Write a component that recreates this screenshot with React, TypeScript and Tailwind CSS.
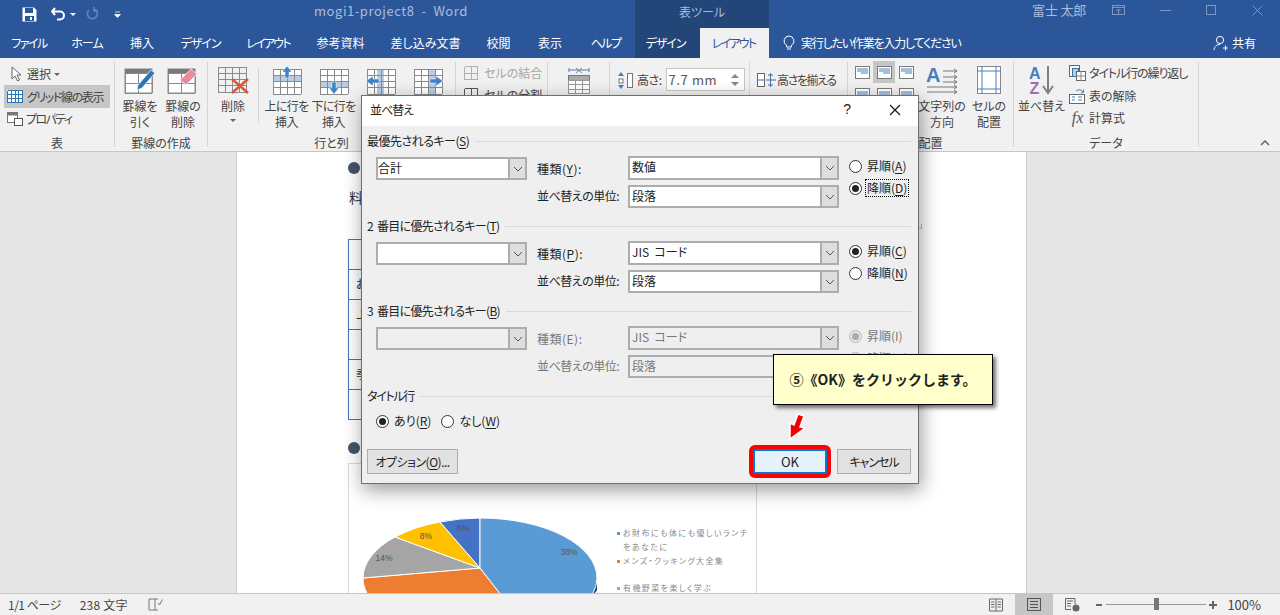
import type { ReactNode } from 'react'

const blue = '#4a7ebb'

function Sep() {
  return <div className="w-px shrink-0 bg-[#d6d6d6] mt-[4px] mb-[4px]" />
}

function Group({ w, label, children }: { w: string; label?: string; children: ReactNode }) {
  return (
    <div className={`${w} shrink-0 flex flex-col`}>
      <div className="flex-1 flex min-h-0">{children}</div>
      <div className="h-[20px] pt-[3px] text-center text-[12px] leading-[18px] text-[#444]">{label}</div>
    </div>
  )
}

function BigBtn({ w, icon, lines, chevron, tight }: { w: string; icon: ReactNode; lines: string[]; chevron?: boolean; tight?: boolean }) {
  return (
    <div className={`${w} shrink-0 flex flex-col items-center pt-[6px]`}>
      <div className="h-[32px] flex items-center justify-center">{icon}</div>
      <div className={`mt-[2px] text-[12px] leading-[16px] text-[#444] text-center whitespace-nowrap ${tight ? 'tracking-[-0.6px]' : ''}`}>
        {lines.map((l) => (
          <div key={l}>{l}</div>
        ))}
      </div>
      {chevron && <div className="w-0 h-0 mt-[5px] border-x-[3px] border-x-transparent border-t-[3px] border-t-[#666]" />}
    </div>
  )
}

function SmallRow({ icon, text, className = '' }: { icon: ReactNode; text: ReactNode; className?: string }) {
  return (
    <div className={`h-[22px] flex items-center gap-[3px] text-[12px] text-[#444] whitespace-nowrap ${className}`}>
      {icon}
      <span className="flex items-center">{text}</span>
    </div>
  )
}

function GridLines({ x, y, w, h, cols, rows, color = '#8a8a8a' }: { x: number; y: number; w: number; h: number; cols: number; rows: number; color?: string }) {
  const v = Array.from({ length: cols + 1 }, (_, i) => x + (w * i) / cols)
  const hz = Array.from({ length: rows + 1 }, (_, i) => y + (h * i) / rows)
  return (
    <g stroke={color} strokeWidth="1" shapeRendering="crispEdges">
      {v.map((p) => (
        <line key={`v${p}`} x1={p} x2={p} y1={y} y2={y + h} />
      ))}
      {hz.map((p) => (
        <line key={`h${p}`} y1={p} y2={p} x1={x} x2={x + w} />
      ))}
    </g>
  )
}

function DrawIcon() {
  return (
    <svg width="32" height="28" viewBox="0 0 32 28">
      <rect x="1" y="3" width="27" height="24" fill="#fff" stroke="#8a8a8a" />
      <rect x="1" y="3" width="27" height="4" fill="#7a7a7a" />
      <GridLines x={1} y={7} w={27} h={20} cols={2} rows={2} />
      <path d="M14 19 L27 4 L31 7 L18 22 L13 24 Z" fill="#2f75b5" stroke="#fff" strokeWidth="0.7" />
    </svg>
  )
}

function EraseIcon() {
  return (
    <svg width="32" height="28" viewBox="0 0 32 28">
      <rect x="1" y="3" width="27" height="24" fill="#fff" stroke="#8a8a8a" />
      <rect x="1" y="3" width="27" height="4" fill="#7a7a7a" />
      <GridLines x={1} y={7} w={27} h={20} cols={2} rows={2} />
      <path d="M13 14 L24 3 L30 8 L19 19 Z" fill="#ea8a9c" stroke="#fff" strokeWidth="0.7" />
    </svg>
  )
}

function DeleteIcon() {
  return (
    <svg width="32" height="28" viewBox="0 0 32 28">
      <GridLines x={1} y={1} w={28} h={25} cols={4} rows={4} />
      <path d="M15 13 L31 27 M31 13 L15 27" stroke="#d9583c" strokeWidth="2.6" />
    </svg>
  )
}

function RowIcon({ up }: { up?: boolean }) {
  return (
    <svg width="30" height="30" viewBox="0 0 30 30">
      <rect x="1" y="4" width="28" height="25" fill="#fff" />
      <rect x="1" y={up ? 10 : 17} width="28" height="6" fill="#b8cce4" />
      <GridLines x={1} y={4} w={28} h={25} cols={4} rows={4} />
      <path d={up ? 'M15 1 L20 7 H17 V13 H13 V7 H10 Z' : 'M15 29 L20 23 H17 V17 H13 V23 H10 Z'} fill="#3e83c4" stroke="#fff" strokeWidth="0.5" />
    </svg>
  )
}

function ColIcon({ left }: { left?: boolean }) {
  return (
    <svg width="30" height="30" viewBox="0 0 30 30">
      <rect x="1" y="4" width="28" height="25" fill="#fff" />
      <rect x={left ? 11 : 15} y="4" width="7" height="25" fill="#b8cce4" />
      <GridLines x={1} y={4} w={28} h={25} cols={4} rows={4} />
      <path d={left ? 'M0 16 L7 11 V14 H13 V18 H7 V21 Z' : 'M30 16 L23 11 V14 H17 V18 H23 V21 Z'} fill="#3e83c4" stroke="#fff" strokeWidth="0.5" />
    </svg>
  )
}

function AlignCell({ active, lines }: { active?: boolean; lines: 'top' | 'mid' }) {
  return (
    <div className={`w-[22px] h-[22px] flex items-center justify-center ${active ? 'bg-[#c6c6c6]' : ''}`}>
      <svg width="15" height="13" viewBox="0 0 15 13">
        <rect x="0.5" y="0.5" width="14" height="12" fill="#fff" stroke="#7a7a7a" />
        <path d={lines === 'top' ? 'M2 3 H13 M2 5 H13 M6 7 H13' : 'M2 4 H13 M2 6 H13 M4 8 H11'} stroke={blue} />
      </svg>
    </div>
  )
}

function Ribbon() {
  return (
    <div className="h-[94px] bg-[#f1f1f1] border-b border-[#c6c6c6] flex">
      <Group w="w-[114px]" label="表">
        <div className="w-full pl-[4px] pr-[4px] pt-[5px] flex flex-col">
          <SmallRow
            className="pl-[6px]"
            icon={
              <svg width="14" height="16" viewBox="0 0 14 16">
                <path d="M2 1 L2 13 L5 10 L7.5 15 L9.5 14 L7 9 L11 9 Z" fill="#fff" stroke="#666" />
              </svg>
            }
            text={
              <>
                選択
                <span className="ml-[3px] w-0 h-0 border-x-[3px] border-x-transparent border-t-[3px] border-t-[#666]" />
              </>
            }
          />
          <SmallRow
            className="h-[23px] bg-[#c6c6c6] pl-[3px] gap-[4px] tracking-[-1.4px]"
            icon={
              <svg width="16" height="13" viewBox="0 0 16 13">
                <rect width="16" height="13" fill="#fff" />
                <GridLines x={0.5} y={0.5} w={15} h={12} cols={4} rows={3} color="#2f75b5" />
              </svg>
            }
            text="グリッド線の表示"
          />
          <SmallRow
            className="pl-[3px] tracking-[-1.6px]"
            icon={
              <svg width="16" height="14" viewBox="0 0 16 14">
                <rect x="0.5" y="0.5" width="10" height="10" fill="#fff" stroke="#777" />
                <rect x="0.5" y="0.5" width="10" height="3" fill="#777" />
                <rect x="7.5" y="6.5" width="8" height="7" fill="#fff" stroke="#555" />
              </svg>
            }
            text="プロパティ"
          />
        </div>
      </Group>
      <Sep />
      <Group w="w-[92px]" label="罫線の作成">
        <div className="pl-[4px] flex">
          <BigBtn w="w-[42px]" icon={<DrawIcon />} lines={['罫線を', '引く']} />
          <BigBtn w="w-[44px]" icon={<EraseIcon />} lines={['罫線の', '削除']} />
        </div>
      </Group>
      <Sep />
      <Group w="w-[247px]" label="行と列">
        <BigBtn w="w-[50px]" icon={<DeleteIcon />} lines={['削除']} chevron />
        <div className="w-px bg-[#d6d6d6] my-[10px] mb-[8px]" />
        <div className="pl-[4px] flex">
          <BigBtn w="w-[47px]" icon={<RowIcon up />} lines={['上に行を', '挿入']} tight />
          <BigBtn w="w-[47px]" icon={<RowIcon />} lines={['下に行を', '挿入']} tight />
          {/* labels of these two sit under the dialog */}
          <BigBtn w="w-[47px]" icon={<ColIcon left />} lines={[]} />
          <BigBtn w="w-[47px]" icon={<ColIcon />} lines={[]} />
        </div>
      </Group>
      <Sep />
      <Group w="w-[91px]">
        <div className="pl-[8px] pt-[4px] flex flex-col">
          <SmallRow
            className="text-[#a6a6a6]"
            icon={
              <svg width="14" height="14" viewBox="0 0 14 14" className="mr-[3px]">
                <GridLines x={0.5} y={0.5} w={13} h={13} cols={2} rows={2} color="#b0b0b0" />
              </svg>
            }
            text="セルの結合"
          />
          <SmallRow
            icon={
              <svg width="14" height="14" viewBox="0 0 14 14" className="mr-[3px]">
                <GridLines x={0.5} y={0.5} w={13} h={13} cols={2} rows={2} color="#555" />
              </svg>
            }
            text="セルの分割"
          />
        </div>
      </Group>
      <Sep />
      <Group w="w-[299px]">
        <div className="w-[61px] flex justify-center pt-[8px]">
          <svg width="24" height="28" viewBox="0 0 24 28">
            <path d="M2 4 H22 M2 2 V6 M22 2 V6" stroke={blue} />
            <path d="M9 2 L15 7 M15 2 L9 7" stroke="#888" />
            <rect x="1.5" y="9.5" width="21" height="18" fill="#fff" stroke="#777" />
            <rect x="2" y="10" width="20" height="4" fill="#aaa" />
            <GridLines x={1.5} y={14} w={21} h={13.5} cols={3} rows={3} color="#999" />
          </svg>
        </div>
        <div className="w-px bg-[#d6d6d6] my-[4px]" />
        <div className="w-[139px] pl-[7px] pt-[11px] flex items-start gap-[4px]">
          <svg width="16" height="17" viewBox="0 0 16 17" className="mt-[3px] shrink-0">
            <path d="M4 0 L7 4 H1 Z M4 17 L7 13 H1 Z" fill={blue} />
            <rect x="2" y="7" width="4" height="4" fill="#fff" stroke="#777" />
            <rect x="10.5" y="1.5" width="5" height="14" fill="#fff" stroke="#777" />
          </svg>
          <span className="text-[12px] text-[#444] leading-[22px] tracking-[-0.5px]">高さ:</span>
          <div className="w-[79px] h-[23px] bg-white border border-[#c6c6c6] flex items-center justify-between pl-[2px] pr-[5px] -mt-[1px] shrink-0">
            <span className="text-[13px] text-[#555] tracking-[0.6px]">7.7 mm</span>
            <span className="flex flex-col gap-[4px]">
              <span className="block w-0 h-0 border-x-[4px] border-x-transparent border-b-[4px] border-b-[#888]" />
              <span className="block w-0 h-0 border-x-[4px] border-x-transparent border-t-[4px] border-t-[#888]" />
            </span>
          </div>
        </div>
        <div className="w-px bg-[#d6d6d6] my-[4px]" />
        <div className="pl-[7px] pt-[4px]">
          <SmallRow
            className="mt-[7px] gap-0 tracking-[-1.4px]"
            icon={
              <svg width="19" height="14" viewBox="0 0 19 14" className="-mr-[2px]">
                <rect x="0.5" y="0.5" width="7" height="13" fill="#fff" stroke="#666" />
                <path d="M0 7 H7 M9 7 H19 M13.5 0 V14 M11 2 H16 M11 12 H16" stroke="#3e6fa8" />
              </svg>
            }
            text="高さを揃える"
          />
        </div>
      </Group>
      <Sep />
      <Group w="w-[165px]" label="配置">
        <div className="pt-[3px] pl-[3px] grid grid-cols-3 h-[47px] w-[69px] shrink-0">
          <AlignCell lines="top" />
          <AlignCell lines="top" active />
          <AlignCell lines="top" />
          <AlignCell lines="mid" />
          <AlignCell lines="mid" />
          <AlignCell lines="mid" />
        </div>
        <BigBtn
          w="w-[50px]"
          icon={
            <svg width="32" height="30" viewBox="0 0 32 30" className="overflow-visible">
              <text x="0" y="17" fontSize="20" fontWeight="700" fill="#4a7ebb" fontFamily="'Liberation Sans',sans-serif">A</text>
              <path d="M17 6 H31 M17 12 H31 M17 17 H31 M1 22 H31 M1 27 H31 M28 4 L31 6 L28 8 M28 10 L31 12 L28 14 M28 15 L31 17 L28 19 M28 20 L31 22 L28 24 M28 25 L31 27 L28 29" stroke="#777" fill="none" />
            </svg>
          }
          lines={['文字列の', '方向']}
        />
        <BigBtn
          w="w-[44px]"
          icon={
            <svg width="24" height="28" viewBox="0 0 24 28">
              <rect x="0.5" y="0.5" width="23" height="27" fill="#fff" stroke="#888" />
              <path d="M5 0 V28 M19 0 V28 M0 5 H24 M0 23 H24" stroke={blue} />
            </svg>
          }
          lines={['セルの', '配置']}
        />
      </Group>
      <Sep />
      <Group w="w-[184px]" label="データ">
        <BigBtn
          w="w-[55px]"
          icon={
            <svg width="26" height="30" viewBox="0 0 26 30" className="overflow-visible">
              <text x="0" y="14" fontSize="16" fontWeight="700" fill="#4a7ebb" fontFamily="'Liberation Sans',sans-serif">A</text>
              <text x="0.5" y="29" fontSize="16" fontWeight="700" fill="#a36bb5" fontFamily="'Liberation Sans',sans-serif">Z</text>
              <path d="M19 1 V27 M14 21 L19 28 L24 21" stroke="#808080" strokeWidth="2" fill="none" />
            </svg>
          }
          lines={['並べ替え']}
        />
        <div className="flex flex-col pt-[4px]">
          <SmallRow
            className="gap-[2px] tracking-[-1.1px]"
            icon={
              <svg width="17" height="16" viewBox="0 0 17 16">
                <rect x="0.5" y="0.5" width="10" height="11" fill="#fff" stroke="#666" />
                <rect x="3.5" y="3.5" width="6" height="8" fill="#b8cce4" stroke="#3e6fa8" />
                <rect x="7.5" y="6.5" width="9" height="9" fill="#fff" stroke="#666" />
                <path d="M12 6 V16 M8 11 H17" stroke="#888" />
              </svg>
            }
            text="タイトル行の繰り返し"
          />
          <SmallRow
            className="h-[23px] gap-[2px]"
            icon={
              <svg width="17" height="16" viewBox="0 0 17 16">
                <path d="M7 3 Q11 0 14 4 M12 5 L14.5 4.5 L14.5 1.5" stroke="#3e83c4" fill="none" />
                <rect x="0.5" y="6.5" width="15" height="9" fill="#fff" stroke="#666" />
                <path d="M3 9 H6 M3 12 H6 M9 9 H13 M9 12 H13" stroke="#3e83c4" />
              </svg>
            }
            text="表の解除"
          />
          <SmallRow
            className="gap-[2px]"
            icon={<span className="w-[17px] text-center font-['Liberation_Serif',serif] italic text-[16px] leading-[16px] text-[#555]">fx</span>}
            text="計算式"
          />
        </div>
      </Group>
      <Sep />
      <div className="flex-1 flex items-end justify-end pr-[10px] pb-[5px]">
        <svg width="10" height="6" viewBox="0 0 10 6">
          <path d="M1 5 L5 1 L9 5" stroke="#666" strokeWidth="1.5" fill="none" />
        </svg>
      </div>
    </div>
  )
}

function TitleBar() {
  return (
    <div className="h-[28px] bg-[#2b579a] flex text-[13px] text-[#a9bcd9]">
      <div className="w-[314px] flex items-center shrink-0">
        <svg width="15" height="15" viewBox="0 0 15 15" className="ml-[22px]">
          <path d="M0.5 0.5 H12 L14.5 3 V14.5 H0.5 Z" fill="#fff" />
          <rect x="3" y="1" width="8" height="5" fill="#2b579a" />
          <rect x="3" y="9" width="9" height="5" fill="#2b579a" />
          <rect x="8" y="10" width="2" height="3" fill="#fff" />
        </svg>
        <svg width="16" height="14" viewBox="0 0 16 14" className="ml-[14px]">
          <path d="M4 1 L1 4.5 L4 8 M1.5 4.5 H9 A4 4 0 0 1 9 12.5 H6" stroke="#fff" strokeWidth="2" fill="none" />
        </svg>
        <span className="ml-[3px] w-0 h-0 border-x-[3px] border-x-transparent border-t-[3px] border-t-white" />
        <svg width="14" height="14" viewBox="0 0 14 14" className="ml-[9px]">
          <path d="M4 3 A5 5 0 1 0 9 2 M9 0 V4 H13" stroke="#6384b6" strokeWidth="1.6" fill="none" />
        </svg>
        <svg width="7" height="7" viewBox="0 0 7 7" className="ml-[15px]">
          <path d="M1 1 H6 M0.5 3.5 H6.5 L3.5 6.5 Z" stroke="#fff" fill="#fff" strokeWidth="0.7" />
        </svg>
      </div>
      <div className="w-[321px] leading-[21px] text-[13px] tracking-[0.55px] whitespace-pre">mogi1-project8  -  Word</div>
      <div className="w-[134px] bg-[#234679] text-center leading-[23px] text-[12px]">表ツール</div>
      <div className="w-[317px] leading-[20px] text-[13px] tracking-[-0.2px] text-right">富士 太郎</div>
      <div className="flex-1 flex items-start pt-[5px]">
        <svg width="13" height="11" viewBox="0 0 13 11" className="ml-[26px]">
          <rect x="0.5" y="0.5" width="12" height="9" fill="none" stroke="#7f98c2" />
          <path d="M0 2.5 H13 M6.5 9 V4 M4.5 6 L6.5 4 L8.5 6" stroke="#7f98c2" fill="none" />
        </svg>
        <div className="w-[11px] h-px bg-[#7f98c2] ml-[35px] mt-[5px]" />
        <div className="w-[10px] h-[10px] border border-[#7f98c2] ml-[35px]" />
        <svg width="11" height="11" viewBox="0 0 11 11" className="ml-[36px]">
          <path d="M0.5 0.5 L10.5 10.5 M10.5 0.5 L0.5 10.5" stroke="#7f98c2" />
        </svg>
      </div>
    </div>
  )
}

function TabBar() {
  const tabs: [string, string][] = [
    ['ファイル', 'w-[58px] tracking-[-1.5px]'],
    ['ホーム', 'w-[58px] tracking-[-1px]'],
    ['挿入', 'w-[52px]'],
    ['デザイン', 'w-[65px] tracking-[-1px]'],
    ['レイアウト', 'w-[70px] tracking-[-1.8px]'],
    ['参考資料', 'w-[75px]'],
    ['差し込み文書', 'w-[95px]'],
    ['校閲', 'w-[51px]'],
    ['表示', 'w-[52px]'],
    ['ヘルプ', 'w-[59px] tracking-[-1.5px]'],
  ]
  return (
    <div className="h-[30px] bg-[#2b579a] flex text-[12px] text-white items-stretch">
      {tabs.map(([t, w]) => (
        <div key={t} className={`${w} shrink-0 flex items-center justify-center`}>
          {t}
        </div>
      ))}
      <div className="w-[65px] shrink-0 bg-[#234679] flex items-center justify-center tracking-[-1px] pr-[4px]">デザイン</div>
      <div className="w-[69px] shrink-0 bg-[#f1f1f1] text-[#2b579a] flex items-center justify-center tracking-[-1.8px] pr-[2px]">レイアウト</div>
      <div className="pl-[13px] flex items-center gap-[3px]">
        <svg width="14" height="16" viewBox="0 0 14 16">
          <path d="M7 1 A5 5 0 0 0 4.5 10.3 V12 H9.5 V10.3 A5 5 0 0 0 7 1 Z M5 14 H9" stroke="#fff" fill="none" />
        </svg>
        <span className="pl-[2px] tracking-[-1.2px]">実行したい作業を入力してください</span>
      </div>
      <div className="flex-1 flex items-center justify-end pr-[24px] gap-[3px]">
        <svg width="16" height="16" viewBox="0 0 16 16">
          <circle cx="7" cy="5" r="3.6" stroke="#fff" fill="none" />
          <path d="M1 15 C1.5 11 4 9.5 7 9.5 M10 13 H15 M12.5 10.5 V15.5" stroke="#fff" fill="none" />
        </svg>
        <span>共有</span>
      </div>
    </div>
  )
}

function PieChart() {
  return (
    <svg width="240" height="130" viewBox="360 515 240 130" className="shrink-0">
      <path d="M597 578 V590 L590 600 L580 600 Z" fill="#1f3a5f" />
      <path d="M480 568 L363 578 A117 60 0 0 0 530 632 Z" fill="#ed7d31" stroke="#fff" />
      <path d="M480 568 L363 578 A117 60 0 0 1 395 537 Z" fill="#a5a5a5" stroke="#fff" />
      <path d="M480 568 L395 537 A117 60 0 0 1 440 522 Z" fill="#ffc000" stroke="#fff" />
      <path d="M480 568 L440 522 A117 60 0 0 1 480 518 Z" fill="#4472c4" stroke="#fff" />
      <path d="M480 568 L480 518 A117 60 0 0 1 597 578 A117 60 0 0 1 530 632 Z" fill="#5b9bd5" stroke="#fff" />
      <g fontSize="8.5" fill="#555" textAnchor="middle" fontFamily="'Liberation Sans',sans-serif">
        <text x="569" y="555">38%</text>
        <text x="384" y="561">14%</text>
        <text x="426" y="539">8%</text>
        <text x="463" y="531">6%</text>
      </g>
    </svg>
  )
}

function Legend({ color, lines, className = '' }: { color: string; lines: string[]; className?: string }) {
  return (
    <div className={`flex gap-[3px] ${className}`}>
      <span className={`w-[3px] h-[3px] mt-[6px] shrink-0 ${color}`} />
      <div className="text-[8px] leading-[14px] tracking-[1.4px] text-[#8a8a8a] whitespace-nowrap">
        {lines.map((l) => (
          <div key={l}>{l}</div>
        ))}
      </div>
    </div>
  )
}

function DocPage() {
  return (
    <div className="flex-1 min-h-0 bg-[#e6e6e6] overflow-hidden">
      <div className="ml-[236px] w-[791px] h-full bg-white border-x border-[#d0d0d0] pl-[111px] overflow-hidden">
        <div className="w-[12px] h-[12px] rounded-full bg-[#44546a] mt-[10px]" />
        <div className="text-[14px] leading-[20px] text-[#333] mt-[13px] pl-[1px]">料</div>
        <div className="w-[530px] mt-[32px] border-l border-t border-[#4472b4] flex flex-col">
          {['', 'お', '上', '', '季', ''].map((t, i) => (
            <div key={i} className="h-[30px] border-b border-[#4472b4] text-[12px] leading-[28px] pl-[7px] text-[#333] shrink-0">
              {t}
            </div>
          ))}
        </div>
        <div className="w-[12px] h-[12px] rounded-full bg-[#44546a] mt-[22px]" />
        <div className="w-[409px] h-[200px] mt-[9px] border border-[#d9d9d9] flex pl-[11px] pt-[51px]">
          <PieChart />
          <div className="w-[0px] pt-[11px] ml-[17px] flex flex-col">
            <Legend color="bg-[#5b9bd5]" lines={['お財布にも体にも優しいランチ', 'をあなたに']} />
            <Legend color="bg-[#ed7d31]" lines={['メンズ・クッキング大全集']} />
            <Legend color="bg-[#a5a5a5]" lines={['有機野菜を楽しく学ぶ']} className="mt-[13px]" />
          </div>
        </div>
      </div>
    </div>
  )
}

function StatusBar() {
  return (
    <div className="h-[22px] bg-[#f1f1f1] border-t border-[#c6c6c6] flex items-center text-[12px] text-[#444]">
      <span className="ml-[8px] tracking-[-0.5px]">1/1 ページ</span>
      <span className="ml-[19px] tracking-[0.2px]">238 文字</span>
      <svg width="15" height="14" viewBox="0 0 15 14" className="ml-[20px]">
        <path d="M1 1 H7 V12 H1 Z M7 1 H10 M7 12 H10 M10 5 L11.5 7 L14.5 1.5" stroke="#777" fill="none" />
      </svg>
      <div className="flex-1" />
      <svg width="14" height="14" viewBox="0 0 14 14">
        <path d="M0.5 1 H7 V13 H0.5 Z M7 1 H13.5 V13 H7 M2 4 H5.5 M2 6.5 H5.5 M2 9 H5.5 M8.5 4 H12 M8.5 6.5 H12 M8.5 9 H12" stroke="#666" fill="none" />
      </svg>
      <div className="ml-[12px] w-[38px] h-full bg-[#c6c6c6] flex items-center justify-center">
        <svg width="14" height="13" viewBox="0 0 14 13">
          <rect x="0.5" y="0.5" width="13" height="12" fill="none" stroke="#555" />
          <path d="M3 3.5 H11 M3 6.5 H11 M3 9.5 H11" stroke="#555" />
        </svg>
      </div>
      <svg width="15" height="14" viewBox="0 0 15 14" className="ml-[12px]">
        <path d="M0.5 0.5 H10 V6 M0.5 0.5 V11.5 H6 M2 3 H8 M2 5.5 H6 M2 8 H6" stroke="#666" fill="none" />
        <circle cx="11" cy="10" r="3.5" fill="#666" />
      </svg>
      <span className="ml-[16px] w-[6px] h-[2px] bg-[#666]" />
      <div className="ml-[4px] w-[100px] h-px bg-[#999] relative">
        <span className="absolute left-[48px] -top-[6px] w-[5px] h-[12px] bg-[#777]" />
      </div>
      <svg width="8" height="8" viewBox="0 0 8 8" className="ml-[3px]">
        <path d="M0 4 H8 M4 0 V8" stroke="#666" strokeWidth="2" />
      </svg>
      <span className="ml-[10px] mr-[19px] text-[13px]">100%</span>
    </div>
  )
}

function ComboArrow() {
  return (
    <div className="w-[17px] h-full bg-[#dedede] border-l-2 border-[#adadad] flex items-center justify-center shrink-0">
      <svg width="10" height="6" viewBox="0 0 10 6">
        <path d="M1 1 L5 5 L9 1" stroke="#555" fill="none" />
      </svg>
    </div>
  )
}

function Select({ value, disabled, h = 'h-[24px]', pad = 'pl-[2px]' }: { value: string; disabled?: boolean; h?: string; pad?: string }) {
  return (
    <div className={`${h} border-2 border-[#adadad] flex ${disabled ? 'bg-[#efefef] text-[#777]' : 'bg-white text-[#222]'}`}>
      <span className={`flex-1 ${pad} text-[12px] leading-[18px] whitespace-pre`}>{value}</span>
      <ComboArrow />
    </div>
  )
}

function Radio({ label, checked, disabled, focus, className = '' }: { label: ReactNode; checked?: boolean; disabled?: boolean; focus?: boolean; className?: string }) {
  return (
    <div className={`flex items-center gap-[3px] h-[22px] whitespace-nowrap ${className}`}>
      <span className={`w-[13px] h-[13px] rounded-full border flex items-center justify-center shrink-0 ${disabled ? 'border-[#bbb] bg-[#e6e6e6]' : 'border-[#333] bg-white'}`}>
        {checked && <span className={`w-[7px] h-[7px] rounded-full ${disabled ? 'bg-[#aaa]' : 'bg-[#222]'}`} />}
      </span>
      <span className={`px-[1px] leading-[16px] border border-dotted ${focus ? 'border-black' : 'border-transparent'} ${disabled ? 'text-[#777]' : 'text-[#222]'}`}>{label}</span>
    </div>
  )
}

function Hot({ k }: { k: string }) {
  return (
    <>
      (<span className="underline underline-offset-2">{k}</span>)
    </>
  )
}

function SectionHead({ children, tight = 'tracking-[-0.5px]' }: { children: ReactNode; tight?: string }) {
  return (
    <div className="h-[18px] flex items-center gap-[6px] whitespace-nowrap text-[#222]">
      <span className={tight}>{children}</span>
      <span className="flex-1 h-px bg-[#d9d9d9]" />
    </div>
  )
}

function SortSection({
  head, tight, keyValue, type, typeLabel, radio1, radio2, checked, focus, disabled,
}: {
  head: ReactNode; tight?: string; keyValue: string; type: string; typeLabel: ReactNode; radio1: ReactNode; radio2: ReactNode; checked: 1 | 2; focus?: boolean; disabled?: boolean
}) {
  const labelCls = disabled ? 'text-[#777]' : 'text-[#222]'
  return (
    <div className="h-[85px]">
      <SectionHead tight={tight}>{head}</SectionHead>
      <div className="flex mt-[6px]">
        <div className="w-[151px] ml-[9px] mt-[1px]">
          <Select value={keyValue} disabled={disabled} h="h-[23px]" pad="pl-[0px]" />
        </div>
        <div className={`w-[91px] ml-[10px] ${labelCls}`}>
          <div className="h-[24px] leading-[26px] tracking-[0.5px]">{typeLabel}</div>
          <div className="h-[24px] mt-[5px] leading-[22px] whitespace-nowrap tracking-[-0.5px]">並べ替えの単位:</div>
        </div>
        <div className="w-[211px] flex flex-col gap-[5px]">
          <Select value={type} disabled={disabled} />
          <Select value="段落" disabled={disabled} h="h-[23px]" />
        </div>
        <div className="ml-[10px] -mt-[1px]">
          <Radio label={radio1} checked={checked === 1} disabled={disabled} />
          <Radio label={radio2} checked={checked === 2} disabled={disabled} focus={focus} />
        </div>
      </div>
    </div>
  )
}

function Button({ children, w, active }: { children: ReactNode; w: string; active?: boolean }) {
  return (
    <div className={`${w} h-[25px] flex items-center justify-center text-[#222] ${active ? 'bg-[#e5f1fb] border-2 border-[#0078d7]' : 'bg-[#e1e1e1] border border-[#adadad]'}`}>
      {children}
    </div>
  )
}

function SortDialog() {
  return (
    <div className="absolute left-[361px] top-[95px] w-[558px] h-[389px] bg-[#efefef] border border-[#6f6f6f] shadow-[2px_6px_18px_rgba(0,0,0,0.4)] flex flex-col text-[12px]">
      <div className="h-[30px] bg-white flex items-center shrink-0 pl-[8px] pb-[3px]">
        <span className="flex-1 text-[#222] tracking-[-1px]">並べ替え</span>
        <span className="font-['Liberation_Sans',sans-serif] text-[14px] text-[#222] mr-[38px]">?</span>
        <svg width="12" height="12" viewBox="0 0 12 12" className="mr-[17px]">
          <path d="M1 1 L11 11 M11 1 L1 11" stroke="#111" strokeWidth="1.1" />
        </svg>
      </div>
      <div className="flex-1 flex flex-col pl-[5px] pr-[7px] pt-[6px] pb-[9px]">
        <SortSection
          head={<>最優先されるキー<Hot k="S" /></>}
          keyValue="合計"
          type="数値"
          typeLabel={<>種類<Hot k="Y" />:</>}
          radio1={<>昇順<Hot k="A" /></>}
          radio2={<>降順<Hot k="D" /></>}
          checked={2}
          focus
        />
        <SortSection
          head={<>2&nbsp;&nbsp;番目に優先されるキー<Hot k="T" /></>}
          tight="tracking-[-0.7px]"
          keyValue=""
          type="JIS  コード"
          typeLabel={<>種類<Hot k="P" />:</>}
          radio1={<>昇順<Hot k="C" /></>}
          radio2={<>降順<Hot k="N" /></>}
          checked={1}
        />
        <SortSection
          head={<>3&nbsp;&nbsp;番目に優先されるキー<Hot k="B" /></>}
          tight="tracking-[-0.7px]"
          keyValue=""
          type="JIS  コード"
          typeLabel="種類(E):"
          radio1="昇順(I)"
          radio2="降順(O)"
          checked={1}
          disabled
        />
        <SectionHead tight="tracking-[-1.3px]">タイトル行</SectionHead>
        <div className="flex pl-[9px] mt-[5px] gap-[8px]">
          <Radio label={<>あり<Hot k="R" /></>} checked />
          <Radio label={<>なし<Hot k="W" /></>} />
        </div>
        <div className="mt-auto flex items-end">
          <Button w="w-[91px]"><span className="tracking-[-0.5px]">オプション<Hot k="O" />...</span></Button>
          <div className="flex-1" />
          <Button w="w-[74px]" active><span className="text-[13px]">OK</span></Button>
          <div className="w-[10px]" />
          <Button w="w-[74px]"><span className="tracking-[-1px]">キャンセル</span></Button>
        </div>
      </div>
    </div>
  )
}

export default function App() {
  return (
    <div className="relative w-[1280px] h-[615px] overflow-hidden flex flex-col bg-[#e6e6e6] font-['Noto_Sans_CJK_JP','Noto_Sans',sans-serif] [font-feature-settings:'palt']">
      <TitleBar />
      <TabBar />
      <Ribbon />
      <DocPage />
      <StatusBar />
      <SortDialog />
      {/* small stray mark on the page, right of the dialog */}
      <div className="absolute left-[919px] top-[224px] w-[3px] h-[5px] border-r border-b border-[#999]" />
      {/* callout and markers over the dialog */}
      <div className="absolute left-[773px] top-[354px] w-[220px] h-[51px] bg-[#ffffcc] border border-black shadow-[3px_3px_4px_rgba(0,0,0,0.55)] flex items-center justify-center text-[14px] font-bold text-[#222] [font-feature-settings:normal]">
        ⑤《OK》をクリックします。
      </div>
      <div className="absolute left-[749px] top-[445px] w-[82px] h-[33px] rounded-[6px] border-[4px] border-[#ff0000]" />
      <svg className="absolute left-[784px] top-[411px]" width="24" height="30" viewBox="0 0 24 30">
        <path d="M6 28 L6 12 L10 14 L14 3 L20 5 L16 16 L21 17 Z" fill="#f00000" stroke="#fff" strokeWidth="1.5" />
      </svg>
    </div>
  )
}
